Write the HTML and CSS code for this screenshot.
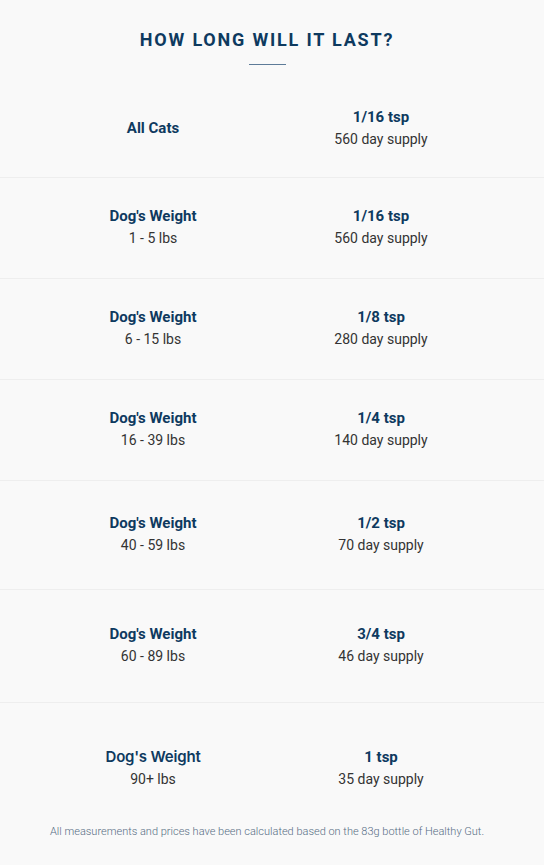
FILE: index.html
```html
<!DOCTYPE html>
<html>
<head>
    <title>How Long Will It Last?</title>
    <link rel="stylesheet" href="styles.css">
</head>
<body>
    <div class="container">
        <h1>How long will it last?</h1>
        <div class="rule"></div>

        <div class="table">
            <div class="row first">
                <div class="cell"><strong>All Cats</strong></div>
                <div class="cell"><strong>1/16 tsp</strong><span>560 day supply</span></div>
            </div>
            <div class="row">
                <div class="cell"><strong>Dog's Weight</strong><span>1 - 5 lbs</span></div>
                <div class="cell"><strong>1/16 tsp</strong><span>560 day supply</span></div>
            </div>
            <div class="row">
                <div class="cell"><strong>Dog's Weight</strong><span>6 - 15 lbs</span></div>
                <div class="cell"><strong>1/8 tsp</strong><span>280 day supply</span></div>
            </div>
            <div class="row">
                <div class="cell"><strong>Dog's Weight</strong><span>16 - 39 lbs</span></div>
                <div class="cell"><strong>1/4 tsp</strong><span>140 day supply</span></div>
            </div>
            <div class="row tall">
                <div class="cell"><strong>Dog's Weight</strong><span>40 - 59 lbs</span></div>
                <div class="cell"><strong>1/2 tsp</strong><span>70 day supply</span></div>
            </div>
            <div class="row taller">
                <div class="cell"><strong>Dog's Weight</strong><span>60 - 89 lbs</span></div>
                <div class="cell"><strong>3/4 tsp</strong><span>46 day supply</span></div>
            </div>
            <div class="row last">
                <div class="cell"><strong class="alt">Dog's Weight</strong><span>90+ lbs</span></div>
                <div class="cell"><strong>1 tsp</strong><span>35 day supply</span></div>
            </div>
        </div>

        <p class="note">All measurements and prices have been calculated based on the 83g bottle of Healthy Gut.</p>
    </div>
</body>
</html>
```

FILE: styles.css
```css
body {
    margin: 0;
    font-family: Roboto, "Liberation Sans", sans-serif;
    background-color: #f9f9f9;
    color: #333;
}

.container {
    width: 534px;
    padding-top: 28px;
}

h1 {
    margin: 0;
    text-align: center;
    font-size: 18px;
    line-height: 24px;
    font-weight: 700;
    letter-spacing: 1.8px;
    text-transform: uppercase;
    color: #0e3a5f;
}

.rule {
    width: 37px;
    height: 1px;
    margin: 12px auto 0;
    background-color: #5d7b98;
}

.table {
    width: 544px;
    margin-top: 16px;
}

.row {
    display: grid;
    grid-template-columns: 228px 228px;
    padding-left: 39px;
    padding-bottom: 3px;
    height: 97px;
    align-items: center;
    border-bottom: 1px solid #eeeeee;
}

.row.first {
    height: 93px;
}

.row.tall {
    height: 105px;
}

.row.taller {
    height: 109px;
}

.row.last {
    height: 81px;
    padding-top: 24px;
    padding-bottom: 0;
    border-bottom: none;
}

.cell {
    display: flex;
    flex-direction: column;
    align-items: center;
    text-align: center;
}

.cell strong {
    font-size: 15px;
    line-height: 22px;
    font-weight: 700;
    color: #0e3a5f;
}

.cell span {
    font-size: 14px;
    line-height: 22px;
    color: #333;
}

.cell strong.alt {
    font-family: Inter, Roboto, sans-serif;
    font-weight: 600;
    font-size: 15px;
    letter-spacing: -0.2px;
}

.note {
    margin: 17px 0 0;
    text-align: center;
    font-size: 11px;
    line-height: 14px;
    font-weight: 300;
    color: #566d84;
}
```
